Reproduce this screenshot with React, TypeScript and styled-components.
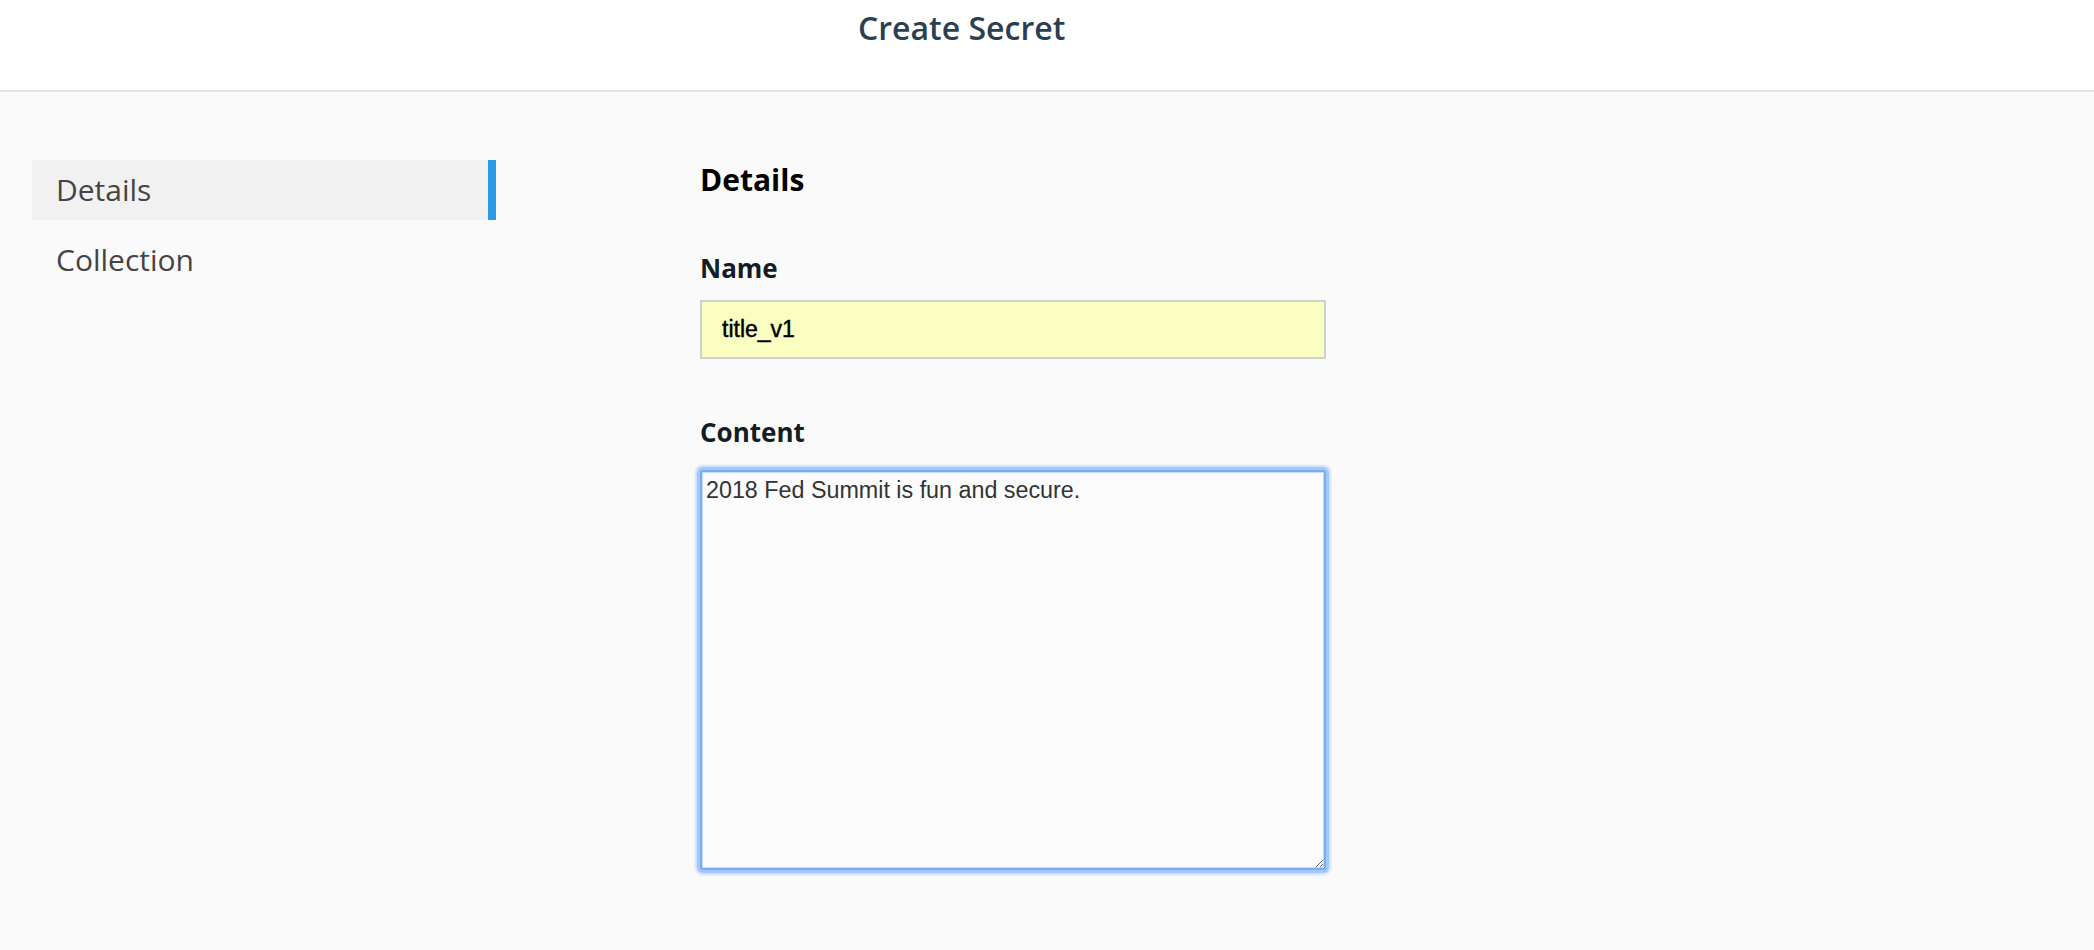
import React from "react";
import styled, { createGlobalStyle } from "styled-components";

const Global = createGlobalStyle`
  html, body {
    margin: 0;
    padding: 0;
    background: #fafafa;
    font-family: "Open Sans", "Liberation Sans", sans-serif;
  }
  * { box-sizing: border-box; }
`;

const Page = styled.div`
  min-height: 950px;
  background: #fafafa;
`;

const Header = styled.header`
  height: 92px;
  background: #ffffff;
  border-bottom: 2px solid #e2e2e2;
  padding: 6px 0 0 858px;
`;

const Title = styled.h1`
  margin: 0;
  font-family: "Open Sans", sans-serif;
  font-weight: 600;
  font-size: 32px;
  line-height: 44px;
  color: #2b3f52;
`;

const Body = styled.div`
  display: grid;
  grid-template-columns: 464px 626px;
  column-gap: 204px;
  padding: 68px 32px;
  align-items: start;
`;

const Nav = styled.nav`
  display: flex;
  flex-direction: column;
  gap: 10px;
`;

const NavItem = styled.div<{ $active?: boolean }>`
  height: 60px;
  line-height: 60px;
  padding-left: 24px;
  font-family: "Open Sans", sans-serif;
  font-size: 30px;
  font-weight: 400;
  color: #454545;
  background: ${(p) => (p.$active ? "#f1f1f1" : "transparent")};
  border-right: 8px solid ${(p) => (p.$active ? "#2a9ae6" : "transparent")};
`;

const Main = styled.main`
  display: flex;
  flex-direction: column;
`;

const Heading = styled.h2`
  margin: 0 0 50px;
  font-family: "Open Sans", sans-serif;
  font-weight: 700;
  font-size: 30px;
  line-height: 40px;
  color: #000;
`;

const Field = styled.div<{ $gap: number; $space: number }>`
  display: flex;
  flex-direction: column;
  gap: ${(p) => p.$gap}px;
  margin-bottom: ${(p) => p.$space}px;
`;

const Label = styled.label`
  font-family: "Open Sans", sans-serif;
  font-weight: 700;
  font-size: 26px;
  line-height: 36px;
  color: #141c24;
`;

const TextInput = styled.input`
  width: 626px;
  height: 59px;
  border: 2px solid #d0d0d0;
  background: #fafec0;
  padding: 0 20px;
  font-family: "Liberation Sans", Arial, sans-serif;
  font-size: 23px;
  color: #000;
  -webkit-text-stroke: 0.45px #000;
  outline: none;
`;

const TextArea = styled.textarea`
  width: 626px;
  height: 400px;
  margin: 0;
  border: 2px solid #78acf5;
  border-radius: 3px;
  background: #fbfbfb;
  padding: 5px 4px;
  font-family: "Liberation Sans", Arial, sans-serif;
  font-size: 23.3px;
  color: #333;
  outline: none;
  box-shadow: 0 0 0 3px #a5c8fa, 0 0 2px 5px rgba(165, 200, 250, 0.5),
    inset 0 0 0 1px #c4dbfc;
  resize: both;
`;

export default function App() {
  return (
    <Page>
      <Global />
      <Header>
        <Title>Create Secret</Title>
      </Header>
      <Body>
        <Nav>
          <NavItem $active>Details</NavItem>
          <NavItem>Collection</NavItem>
        </Nav>
        <Main>
          <Heading>Details</Heading>
          <Field $gap={14} $space={55}>
            <Label>Name</Label>
            <TextInput defaultValue="title_v1" />
          </Field>
          <Field $gap={20} $space={0}>
            <Label>Content</Label>
            <TextArea defaultValue="2018 Fed Summit is fun and secure." />
          </Field>
        </Main>
      </Body>
    </Page>
  );
}
